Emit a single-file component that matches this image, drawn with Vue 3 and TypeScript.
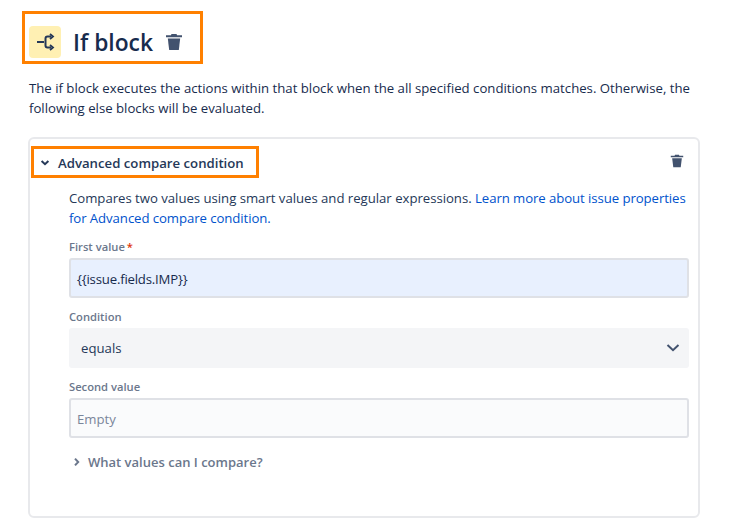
<script setup lang="ts">
const description =
  'The if block executes the actions within that block when the all specified conditions matches. Otherwise, the following else blocks will be evaluated.'
const firstValue = '{' + '{issue.fields.IMP}' + '}'
</script>

<template>
  <main class="page">
    <header class="title-row">
      <span class="block-icon">
        <svg width="20" height="20" viewBox="-1 0 20 20" fill="none" stroke="#253858" stroke-width="2">
          <path d="M1 10h7" />
          <path d="M15 4.5h-3.5a2 2 0 0 0-2 2v7a2 2 0 0 0 2 2H15" />
          <path d="M14 2l3 2.5-3 2.5M14 13l3 2.5-3 2.5" stroke-width="1.8" />
        </svg>
      </span>
      <h1>If block</h1>
      <svg class="trash-lg" width="18" height="18" viewBox="0 0 18 18">
        <path d="M6.5 1h5l.6 1.2H17v2H1v-2h4.9z" fill="#42526e" />
        <path d="M2.8 5.4h12.4L13.8 17H4.2z" fill="#42526e" />
      </svg>
    </header>

    <p class="description">{{ description }}</p>

    <section class="card">
      <div class="card-head">
        <div class="card-title">
          <svg width="10" height="10" viewBox="0 0 10 10" fill="none" stroke="#253858" stroke-width="2">
            <path d="M1.6 3l3.4 3.2L8.4 3" />
          </svg>
          <span>Advanced compare condition</span>
        </div>
        <svg class="trash-sm" width="14" height="14" viewBox="0 0 18 18">
          <path d="M6.5 1h5l.6 1.2H17v2H1v-2h4.9z" fill="#42526e" />
          <path d="M2.8 5.4h12.4L13.8 17H4.2z" fill="#42526e" />
        </svg>
      </div>

      <div class="card-body">
        <p class="intro">
          Compares two values using smart values and regular expressions.
          <a>Learn more about issue properties for Advanced compare condition.</a>
        </p>

        <label class="field-label">First value<span class="req">*</span></label>
        <div class="input filled">{{ firstValue }}</div>

        <label class="field-label">Condition</label>
        <div class="select">
          <span>equals</span>
          <svg width="14" height="14" viewBox="0 0 14 14" fill="none" stroke="#42526e" stroke-width="2">
            <path d="M1.5 4l5.5 5.2L12.5 4" />
          </svg>
        </div>

        <label class="field-label">Second value</label>
        <div class="input empty">Empty</div>

        <div class="more">
          <svg width="10" height="10" viewBox="0 0 10 10" fill="none" stroke="#6b778c" stroke-width="2">
            <path d="M3 1.6L6.2 5 3 8.4" />
          </svg>
          <span>What values can I compare?</span>
        </div>
      </div>
    </section>
  </main>
</template>

<style scoped>
.page {
  width: 738px;
  height: 530px;
  box-sizing: border-box;
  padding: 11px 38px 0 22px;
  overflow: hidden;
  font-family: "Open Sans", "Noto Sans", sans-serif;
  color: #253858;
  background: #fff;
}

.title-row {
  display: flex;
  align-items: center;
  width: 181px;
  height: 53px;
  box-sizing: border-box;
  border: 3px solid #ff8000;
  padding: 9px 0 0 4px;
}

.block-icon {
  width: 32px;
  height: 32px;
  display: flex;
  align-items: center;
  justify-content: center;
  background: #fff0b3;
  border-radius: 4px;
}

h1 {
  margin: 2px 0 0 12px;
  font-size: 22.8px;
  font-weight: 600;
  line-height: 32px;
  color: #172b4d;
}

.trash-lg {
  margin-left: 12px;
}

.description {
  margin: 14px 0 0 7px;
  width: 668px;
  font-size: 13.2px;
  line-height: 20px;
  color: #172b4d;
}

.card {
  margin: 19px 0 0 6px;
  width: 672px;
  height: 381px;
  box-sizing: border-box;
  border: 2px solid #e8e9ec;
  border-radius: 6px;
  padding: 7px 9px 0 1px;
}

.card-head {
  display: flex;
  align-items: flex-start;
  justify-content: space-between;
  padding-right: 5px;
}

.card-title {
  display: flex;
  align-items: center;
  gap: 8px;
  width: 228px;
  height: 32px;
  box-sizing: border-box;
  border: 3px solid #ff8000;
  padding: 1px 0 0 6px;
  font-size: 13.2px;
  font-weight: 600;
  color: #253858;
}

.trash-sm {
  margin-top: 8px;
}

.card-body {
  padding: 10px 0 0 38px;
}

.intro {
  margin: 0 -6px 0 0;
  font-size: 13.2px;
  line-height: 20px;
  letter-spacing: -0.03px;
  color: #253858;
}

.intro a {
  color: #0052cc;
  letter-spacing: -0.08px;
}

.field-label {
  display: block;
  margin-top: 10px;
  height: 20px;
  font-size: 11.2px;
  font-weight: 600;
  line-height: 18px;
  color: #6b778c;
}

.req {
  color: #de350b;
  margin-left: 2px;
}

.input {
  height: 40px;
  box-sizing: border-box;
  border: 2px solid #dfe1e6;
  border-radius: 3px;
  padding-left: 6px;
  font-size: 13.2px;
  line-height: 38px;
}

.filled {
  background: #e8f0fe;
  color: #172b4d;
  letter-spacing: -0.2px;
}

.empty {
  background: #fafbfc;
  color: #7a869a;
}

.select {
  display: flex;
  align-items: center;
  justify-content: space-between;
  height: 40px;
  box-sizing: border-box;
  padding: 0 9px 0 12px;
  background: #f4f5f7;
  border-radius: 3px;
  font-size: 13.2px;
  color: #253858;
}

.more {
  display: flex;
  align-items: center;
  gap: 6px;
  margin-top: 15px;
  padding-left: 3px;
  font-size: 13px;
  font-weight: 600;
  color: #6b778c;
}
</style>
